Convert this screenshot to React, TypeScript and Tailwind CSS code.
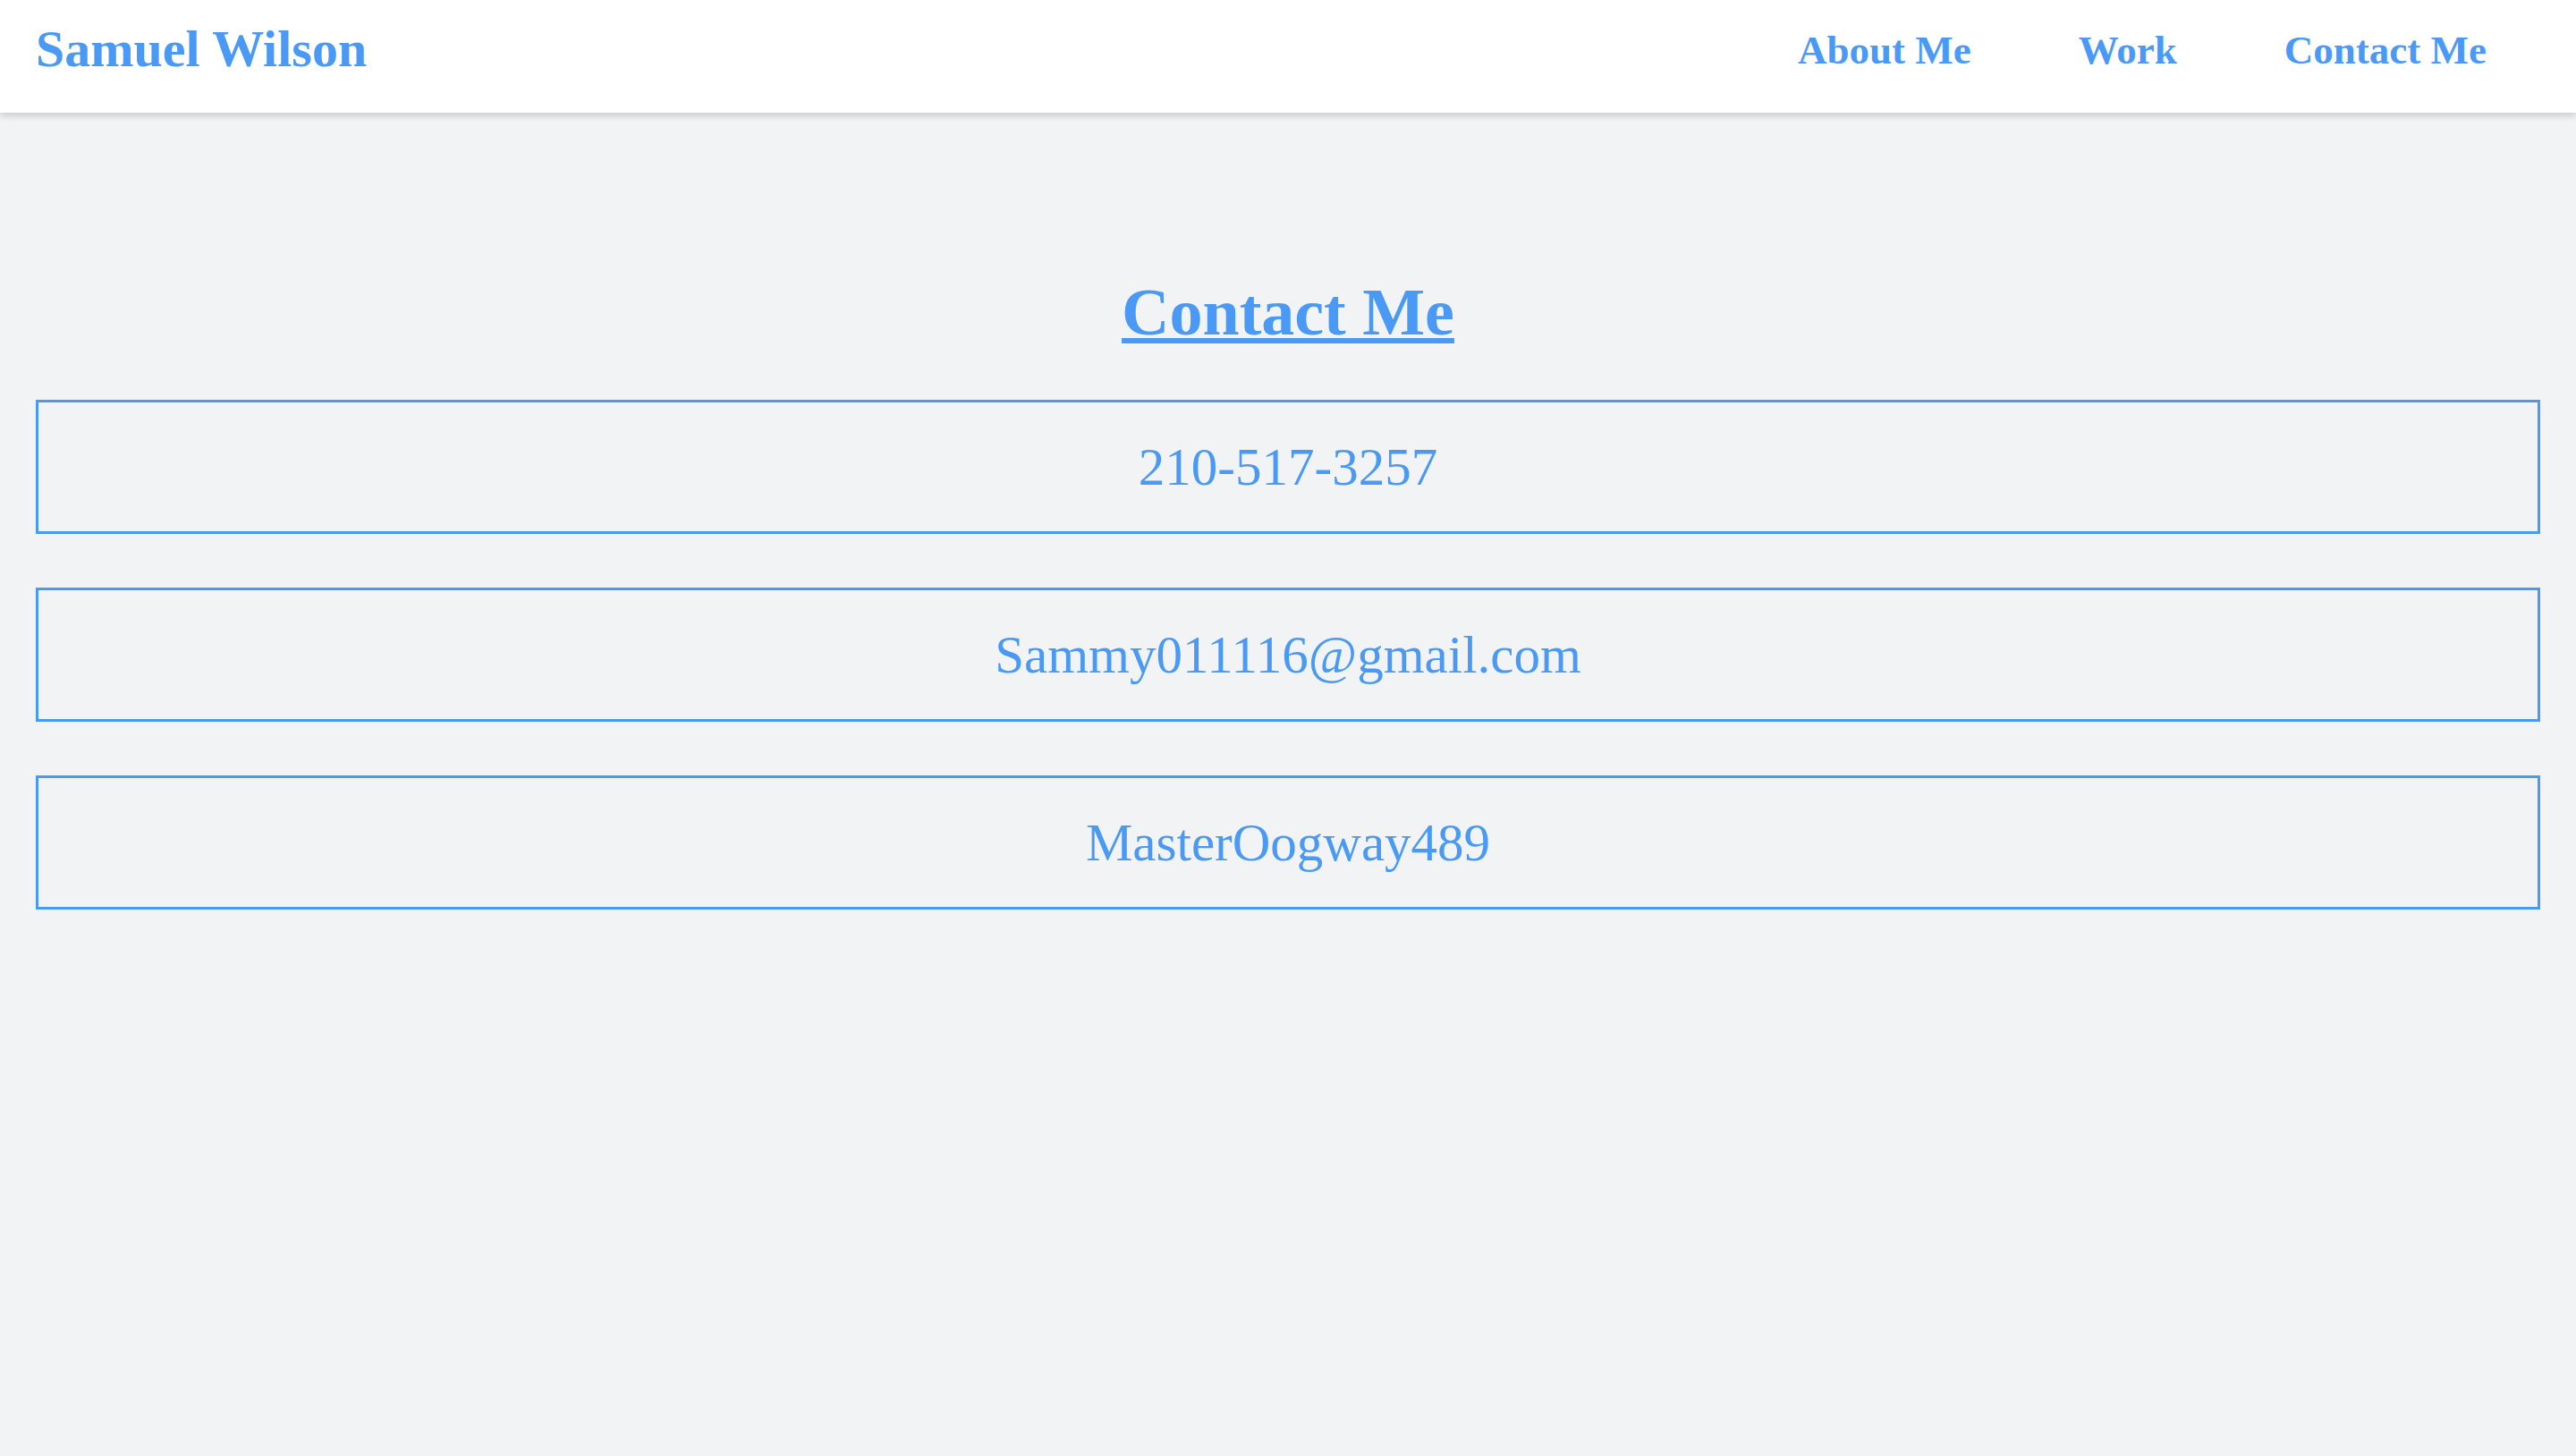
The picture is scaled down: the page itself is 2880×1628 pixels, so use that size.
import React from "react";

export default function App() {
  const items = ["210-517-3257", "Sammy011116@gmail.com", "MasterOogway489"];
  return (
    <div className="min-h-[1628px] bg-[#f2f3f5] font-['Liberation_Serif',serif] text-[#4a9af5]">
      <header className="relative z-10 flex h-[126px] items-start justify-between bg-white pl-10 pr-10 shadow-[0_3px_8px_rgba(0,0,0,0.18)]">
        <h1 className="mt-[26px] text-[58px] font-bold leading-none">Samuel Wilson</h1>
        <nav className="mt-[34px] flex">
          <a className="px-15 text-[45px] font-bold leading-none">About Me</a>
          <a className="px-15 text-[45px] font-bold leading-none">Work</a>
          <a className="px-15 text-[45px] font-bold leading-none">Contact Me</a>
        </nav>
      </header>
      <main className="flex flex-col items-center px-10 pt-[186px]">
        <h2 className="text-[74px] font-bold leading-none underline decoration-[6px] underline-offset-[4px]">
          Contact Me
        </h2>
        <div className="mt-[61px] flex w-full flex-col gap-[60px]">
          {items.map((t) => (
            <div
              key={t}
              className="flex h-[150px] items-center justify-center border-[3px] border-[#4a9af5] text-[59px] leading-none"
            >
              {t}
            </div>
          ))}
        </div>
      </main>
    </div>
  );
}
